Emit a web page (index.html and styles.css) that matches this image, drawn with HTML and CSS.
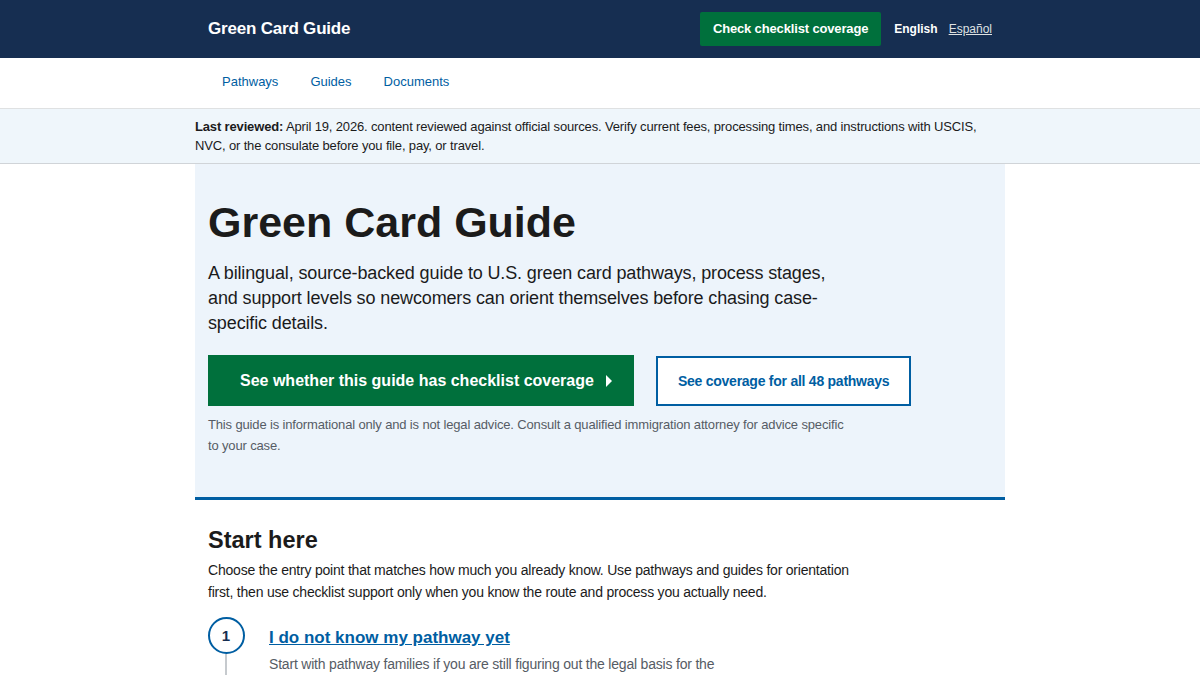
FILE: index.html
```html
<!DOCTYPE html>
<html lang="en">
<head>
<meta charset="UTF-8" />
<meta name="viewport" content="width=device-width, initial-scale=1" />
<title>Green Card Guide</title>
<link rel="stylesheet" href="styles.css">
</head>
<body>

<header class="site-header">
  <div class="wrap header-inner">
    <a class="brand" href="#">Green Card Guide</a>
    <div class="header-actions">
      <a class="btn-header" href="#">Check checklist coverage</a>
      <span class="lang-current">English</span>
      <a class="lang-link" href="#">Español</a>
    </div>
  </div>
</header>

<nav class="site-nav">
  <div class="wrap nav-inner">
    <a href="#">Pathways</a>
    <a href="#">Guides</a>
    <a href="#">Documents</a>
  </div>
</nav>

<div class="review-banner">
  <div class="wrap">
    <p><strong>Last reviewed:</strong> April 19, 2026. content reviewed against official sources. Verify current fees, processing times, and instructions with USCIS, NVC, or the consulate before you file, pay, or travel.</p>
  </div>
</div>

<main class="wrap">
  <section class="hero">
    <h1>Green Card Guide</h1>
    <p class="lead">A bilingual, source-backed guide to U.S. green card pathways, process stages, and support levels so newcomers can orient themselves before chasing case-specific details.</p>
    <div class="hero-actions">
      <a class="btn-primary" href="#">See whether this guide has checklist coverage <span class="caret"></span></a>
      <a class="btn-outline" href="#">See coverage for all 48 pathways</a>
    </div>
    <p class="disclaimer">This guide is informational only and is not legal advice. Consult a qualified immigration attorney for advice specific to your case.</p>
  </section>

  <section class="start">
    <h2>Start here</h2>
    <p class="intro">Choose the entry point that matches how much you already know. Use pathways and guides for orientation first, then use checklist support only when you know the route and process you actually need.</p>

    <ol class="steps">
      <li class="step">
        <div class="step-marker"><span class="step-num">1</span></div>
        <div class="step-body">
          <a class="step-title" href="#">I do not know my pathway yet</a>
          <p>Start with pathway families if you are still figuring out the legal basis for the green card you may qualify for.</p>
        </div>
      </li>
    </ol>
  </section>
</main>

</body>
</html>
```

FILE: styles.css
```css
body {
  margin: 0;
  font-family: "Liberation Sans", Arial, sans-serif;
  color: #1b1b1b;
  background: white;
}

a {
  color: #005ea2;
}

.wrap {
  max-width: 810px;
  margin: 0 auto;
}

/* header */
.site-header {
  background-color: #162e51;
  height: 58px;
}

.header-inner {
  display: flex;
  align-items: center;
  justify-content: space-between;
  height: 58px;
  padding: 0 13px;
  box-sizing: border-box;
}

.brand {
  color: white;
  font-weight: bold;
  font-size: 17px;
  letter-spacing: -0.2px;
  text-decoration: none;
}

.header-actions {
  display: flex;
  align-items: center;
}

.btn-header {
  background-color: #00703c;
  color: white;
  font-weight: bold;
  font-size: 13px;
  letter-spacing: -0.15px;
  text-decoration: none;
  padding: 9px 13px;
  border-radius: 2px;
  line-height: 16px;
  margin-right: 13px;
}

.lang-current {
  color: white;
  font-weight: bold;
  font-size: 12px;
  margin-right: 11px;
}

.lang-link {
  color: #dfe1e2;
  font-size: 12px;
}

/* nav */
.site-nav {
  border-bottom: 1px solid #dfe1e2;
}

.nav-inner {
  display: flex;
  gap: 4px;
  height: 50px;
  align-items: center;
  padding: 0 13px 4px;
  box-sizing: border-box;
}

.nav-inner a {
  font-size: 13px;
  text-decoration: none;
  padding: 0 14px;
}

/* review banner */
.review-banner {
  background-color: #eff6fb;
  border-bottom: 1px solid #d0d4d8;
}

.review-banner p {
  margin: 0;
  padding: 8px 0;
  font-size: 13px;
  letter-spacing: -0.15px;
  line-height: 19px;
}

/* hero */
.hero {
  background-color: #edf4fb;
  border-bottom: 3px solid #005ea2;
  padding: 32px 13px 41px;
}

.hero h1 {
  font-size: 43px;
  line-height: 52px;
  margin: 0 0 13px;
}

.lead {
  font-size: 18px;
  letter-spacing: -0.13px;
  line-height: 25px;
  max-width: 630px;
  margin: 0 0 19px;
}

.hero-actions {
  display: flex;
  align-items: center;
  gap: 22px;
}

.btn-primary {
  display: inline-flex;
  align-items: center;
  background-color: #00703c;
  color: white;
  font-weight: bold;
  font-size: 16px;
  text-decoration: none;
  height: 51px;
  padding: 0 22px 0 32px;
  box-sizing: border-box;
}

.caret {
  display: inline-block;
  width: 0;
  height: 0;
  border-top: 6px solid transparent;
  border-bottom: 6px solid transparent;
  border-left: 6px solid white;
  margin-left: 12px;
}

.btn-outline {
  display: inline-flex;
  align-items: center;
  height: 50px;
  padding: 0 20px;
  box-sizing: border-box;
  border: 2px solid #005ea2;
  background: white;
  color: #005ea2;
  font-weight: bold;
  font-size: 14px;
  letter-spacing: -0.25px;
  text-decoration: none;
}

.disclaimer {
  color: #565c65;
  font-size: 13px;
  letter-spacing: -0.15px;
  line-height: 21px;
  max-width: 645px;
  margin: 8px 0 0;
}

/* start here */
.start {
  padding: 25px 13px 0;
}

.start h2 {
  font-size: 23.5px;
  margin: 0 0 4px;
  line-height: 30px;
}

.intro {
  font-size: 14px;
  letter-spacing: -0.21px;
  line-height: 22px;
  max-width: 650px;
  margin: 0 0 14px;
}

.steps {
  list-style: none;
  margin: 0;
  padding: 0;
}

.step {
  display: flex;
  gap: 24px;
}

.step-marker {
  width: 38px;
  display: flex;
  flex-direction: column;
  align-items: center;
  margin-left: -1px;
}

.step-marker::after {
  content: "";
  width: 2px;
  flex: 1;
  background: #c6cace;
}

.step-num {
  width: 37px;
  height: 37px;
  box-sizing: border-box;
  border: 2px solid #005ea2;
  border-radius: 50%;
  display: flex;
  align-items: center;
  justify-content: center;
  font-weight: bold;
  font-size: 15px;
  color: #162e51;
  background: white;
}

.step-body {
  padding-top: 11px;
}

.step-title {
  font-size: 17px;
  font-weight: bold;
}

.step-body p {
  color: #565c65;
  font-size: 14px;
  letter-spacing: -0.2px;
  line-height: 22px;
  max-width: 460px;
  margin: 5px 0 0;
}
```
